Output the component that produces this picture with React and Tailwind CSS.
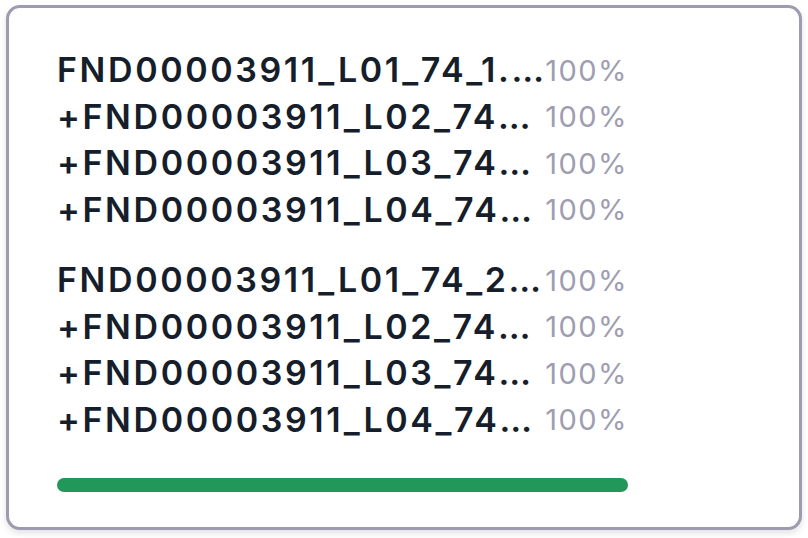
import React from 'react';

const groups = [
  [
    { name: 'FND00003911_L01_74_1.xlsx', pct: '100%' },
    { name: '+FND00003911_L02_74_1.xlsx', pct: '100%' },
    { name: '+FND00003911_L03_74_1.xlsx', pct: '100%' },
    { name: '+FND00003911_L04_74_1.xlsx', pct: '100%' },
  ],
  [
    { name: 'FND00003911_L01_74_2.xlsx', pct: '100%' },
    { name: '+FND00003911_L02_74_2.xlsx', pct: '100%' },
    { name: '+FND00003911_L03_74_2.xlsx', pct: '100%' },
    { name: '+FND00003911_L04_74_2.xlsx', pct: '100%' },
  ],
];

const App = () => {
  return (
    <div
      className="w-[808px] h-[538px] bg-white pt-[5px] pl-[6px]"
      style={{ fontFamily: 'Inter, "Noto Sans", sans-serif' }}
    >
      <div className="w-[796px] h-[525px] rounded-[14px] border-[3px] border-[#9c9bb0] bg-white shadow-[0_3px_6px_rgba(0,0,0,0.12)] pl-[48px] pt-[39px]">
        <div className="w-[571px] flex flex-col gap-[24px]">
          {groups.map((rows, i) => (
            <div key={i} className="flex flex-col">
              {rows.map((r) => (
                <div key={r.name} className="flex items-center h-[46.5px]">
                  <span className="w-[490px] truncate text-[34px] font-semibold tracking-[2.6px] text-[#151e2a] leading-[46px]">
                    {r.name}
                  </span>
                  <span className="text-[29px] tracking-[1.5px] text-[#9e9db1] leading-none">{r.pct}</span>
                </div>
              ))}
            </div>
          ))}
          <div className="mt-[11px] h-[14px] w-[571px] rounded-full bg-[#21975a]" />
        </div>
      </div>
    </div>
  );
};

export default App;
